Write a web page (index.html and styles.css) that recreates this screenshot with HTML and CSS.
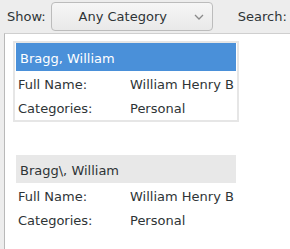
FILE: index.html
```html
<!DOCTYPE html>
<html>
<head>
    <meta charset="UTF-8">
    <title>Contacts</title>
    <link rel="stylesheet" href="styles.css">
</head>
<body>
<div class="toolbar">
    <span class="label">Show:</span>
    <div class="combo">
        <span class="combo-text">Any Category</span>
        <span class="combo-arrow">
            <svg width="10" height="6" viewBox="0 0 10 6"><path d="M1 1 L5 5 L9 1" fill="none" stroke="#8a8a8a" stroke-width="1.3"/></svg>
        </span>
    </div>
    <span class="label search-label">Search:</span>
    <div class="entry"></div>
</div>
<div class="frame">
    <div class="card selected">
        <div class="card-head">Bragg, William</div>
        <div class="card-body">
            <div class="row"><span class="key">Full Name:</span><span class="val">William Henry Bragg</span></div>
            <div class="row"><span class="key">Categories:</span><span class="val">Personal</span></div>
        </div>
    </div>
    <div class="card">
        <div class="card-head">Bragg\, William</div>
        <div class="card-body">
            <div class="row"><span class="key">Full Name:</span><span class="val">William Henry Bragg</span></div>
            <div class="row"><span class="key">Categories:</span><span class="val">Personal</span></div>
        </div>
    </div>
</div>
</body>
</html>
```
FILE: styles.css
```css
body {
    margin: 0;
    padding: 0;
    background: #ededed;
    font-family: "DejaVu Sans", sans-serif;
    font-size: 13px;
    color: #2e3436;
    overflow: hidden;
    height: 249px;
}

.toolbar {
    display: flex;
    align-items: center;
    height: 33px;
    padding-left: 7px;
    white-space: nowrap;
    overflow: hidden;
}

.combo {
    display: flex;
    align-items: center;
    flex: none;
    box-sizing: border-box;
    width: 162px;
    height: 29px;
    margin-left: 5px;
    border: 1px solid #bcbcbc;
    border-radius: 4px;
    background: linear-gradient(#f6f6f6, #e9e9e9);
}

.combo-text {
    flex: 1;
    text-align: center;
}

.combo-arrow {
    display: flex;
    width: 18px;
}

.search-label {
    margin-left: 25px;
}

.entry {
    flex: none;
    box-sizing: border-box;
    width: 30px;
    height: 28px;
    margin-left: 5px;
    border: 1px solid #4a90d9;
    border-radius: 3px;
    background: #fff;
}

.frame {
    margin-left: 4px;
    height: 216px;
    border-left: 1px solid #b9b9b9;
    border-top: 1px solid #cfcfcf;
    background: #fff;
    padding-top: 7px;
    box-sizing: border-box;
}

.card {
    width: 226px;
    margin-left: 8px;
    margin-bottom: 31px;
    box-sizing: border-box;
    border: 2px solid transparent;
    padding: 0 1px;
}

.card.selected {
    border-color: #e6e6e6;
}

.card-head {
    height: 28px;
    box-sizing: border-box;
    padding: 4px 4px 0;
    line-height: 24px;
    background: #e8e8e8;
    color: #2e3436;
    white-space: nowrap;
}

.selected .card-head {
    background: #4a90d9;
    color: #fff;
}

.card-body {
    padding: 2px 2px 0;
}

.row {
    display: flex;
    line-height: 23.5px;
    white-space: nowrap;
    overflow: hidden;
}

.key {
    flex: none;
    width: 112px;
}

.val {
    overflow: hidden;
}
```
